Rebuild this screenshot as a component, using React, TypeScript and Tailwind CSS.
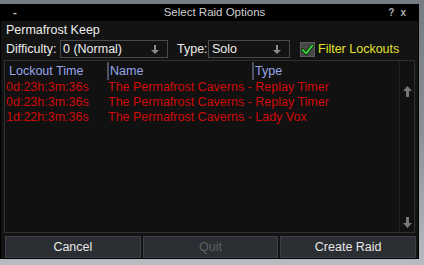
function DownArrow() {
  return (
    <svg width="8" height="9" viewBox="0 0 8 9" className="text-[#8a8a8a]">
      <path d="M3 0h2v5h3L4 9 0 5h3z" fill="currentColor" />
    </svg>
  );
}

function ScrollArrow({ down }: { down?: boolean }) {
  return (
    <svg
      width="9"
      height="11"
      viewBox="0 0 9 11"
      className={`text-[#777] ${down ? "rotate-180" : ""}`}
    >
      <path d="M3 11h3V5h3L4.5 0 0 5h3z" fill="currentColor" />
    </svg>
  );
}

function Check() {
  return (
    <svg width="15" height="13" viewBox="0 0 15 13">
      <path
        d="M2 7l4 4 7-9"
        fill="none"
        stroke="#0a2a0a"
        strokeWidth="4"
        strokeLinecap="round"
        strokeLinejoin="round"
      />
      <path
        d="M2 7l4 4 7-9"
        fill="none"
        stroke="#39d23c"
        strokeWidth="2.2"
        strokeLinecap="round"
        strokeLinejoin="round"
      />
    </svg>
  );
}

const rows = [
  { time: "0d:23h:3m:36s", name: "The Permafrost Caverns - Replay Timer" },
  { time: "0d:23h:3m:36s", name: "The Permafrost Caverns - Replay Timer" },
  { time: "1d:22h:3m:36s", name: "The Permafrost Caverns - Lady Vox" },
];

export default function App() {
  return (
    <div
      className="w-[424px] h-[265px] overflow-hidden bg-gradient-to-b from-[#767b82] via-[#8d9096] to-[#b9bbc2] pt-[4px]"
      style={{ fontFamily: '"Liberation Sans", Arial, sans-serif' }}
    >
      <div className="w-[419px] h-[255px] bg-[#131313] border border-black flex flex-col">
        {/* Title Bar */}
        <div className="h-[16px] bg-black flex items-center px-[12px] text-[#cfcfcf] text-[11.5px] leading-none">
          <span className="w-[30px] font-bold text-[#d0d0d0]">-</span>
          <span className="flex-1 text-center pl-[10px]">Select Raid Options</span>
          <span className="w-[30px] flex justify-end gap-[6px] text-[10px] text-[#b0b0b0] font-bold">
            <span>?</span>
            <span>x</span>
          </span>
        </div>

        {/* Zone */}
        <div className="px-[5px] pt-[1px] text-[12.5px] text-[#ededed] leading-[16px]">
          Permafrost Keep
        </div>

        {/* Options */}
        <div className="flex items-center pl-[5px] h-[18px] mt-[2px] text-[12.5px] text-[#ededed]">
          <span className="w-[54px]">Difficulty:</span>
          <div className="w-[108px] h-[18px] border border-[#4a4a4a] flex items-center justify-between pl-[2px] pr-[8px]">
            <span>0 (Normal)</span>
            <DownArrow />
          </div>
          <span className="ml-[9px] w-[31px]">Type:</span>
          <div className="w-[82px] h-[18px] border border-[#4a4a4a] flex items-center justify-between pl-[3px] pr-[8px]">
            <span>Solo</span>
            <DownArrow />
          </div>
          <div className="ml-[10px] w-[15px] h-[15px] bg-[#474747] border border-[#5c5c5c] flex items-center justify-center">
            <Check />
          </div>
          <span className="ml-[3px] text-[#e2e22c]">Filter Lockouts</span>
        </div>

        {/* List */}
        <div className="mx-[3px] mt-[2px] h-[173px] bg-[#111111] border border-[#303030] flex">
          <div className="flex-1 pl-[1px] pt-[1px] text-[12.5px] leading-[15px]">
            <div className="flex text-[#9aa6ea] h-[18px] items-center pl-[3px]">
              <span className="w-[98px]">Lockout Time</span>
              <span className="w-[2px] h-[18px] bg-[#4d5268] mr-[1px]" />
              <span className="w-[142px]">Name</span>
              <span className="w-[2px] h-[18px] bg-[#4d5268] mr-[1px]" />
              <span>Type</span>
            </div>
            {rows.map((r, i) => (
              <div key={i} className="flex text-[#cf0a0a]">
                <span className="w-[102px]">{r.time}</span>
                <span>{r.name}</span>
              </div>
            ))}
          </div>
          <div className="w-[15px] border-l border-[#222] flex flex-col items-center justify-between pt-[25px] pb-[4px]">
            <ScrollArrow />
            <ScrollArrow down />
          </div>
        </div>

        {/* Buttons */}
        <div className="flex gap-[2px] pl-[4px] pr-[2px] mt-[3px]">
          <button className="flex-1 h-[22px] bg-[#2b2e32] border border-[#3c3f44] text-[12.5px] text-[#e8e8e8]">
            Cancel
          </button>
          <button className="flex-1 h-[22px] bg-[#2b2e32] border border-[#3c3f44] text-[12.5px] text-[#5e6064]">
            Quit
          </button>
          <button className="flex-1 h-[22px] bg-[#2b2e32] border border-[#3c3f44] text-[12.5px] text-[#e8e8e8]">
            Create Raid
          </button>
        </div>
      </div>
    </div>
  );
}
